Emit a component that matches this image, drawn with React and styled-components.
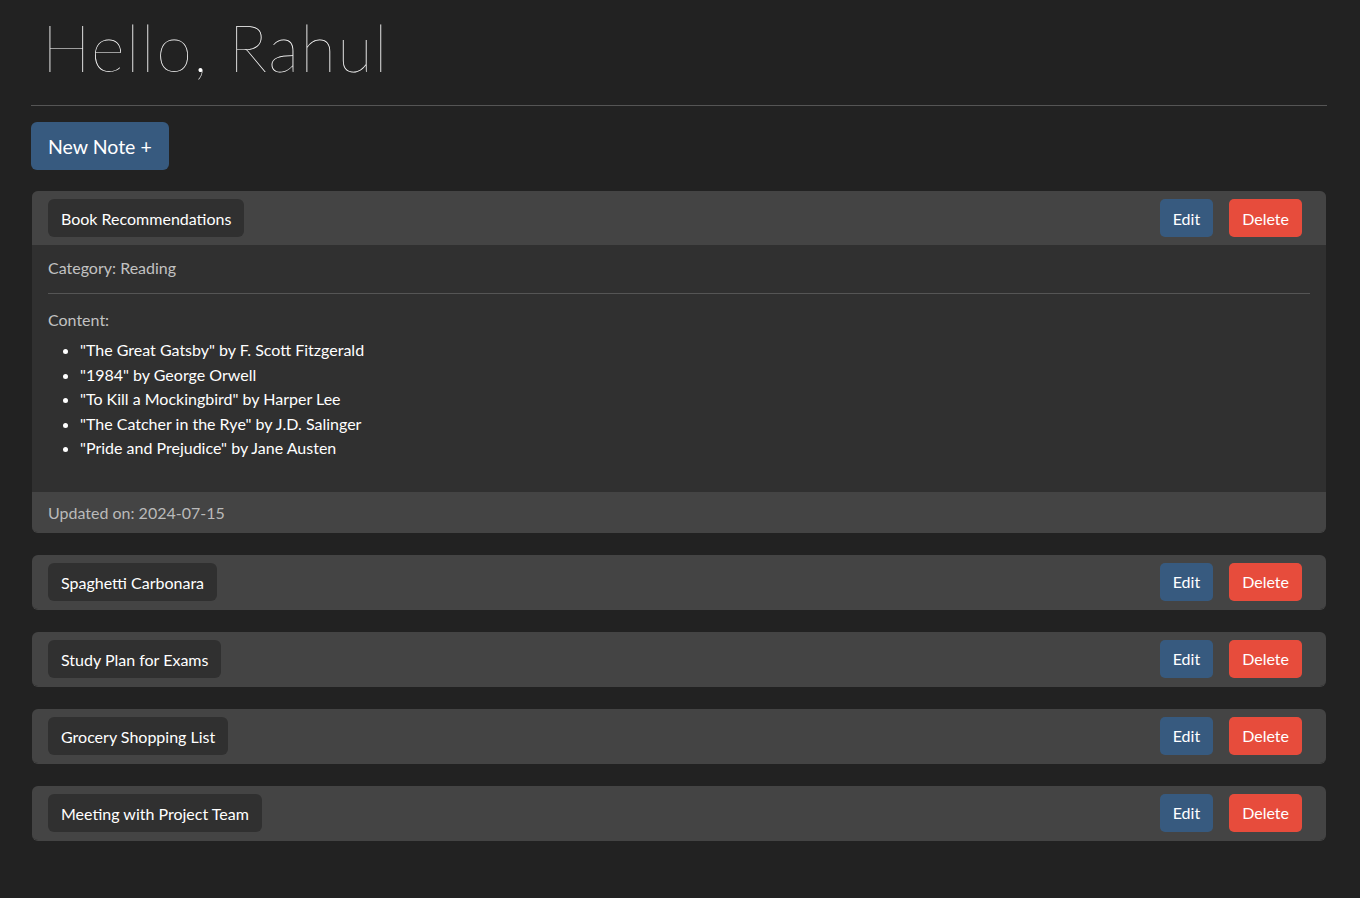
import React from "react";
import styled, { createGlobalStyle } from "styled-components";

const GlobalStyle = createGlobalStyle`
  html, body {
    margin: 0;
    background: #222222;
    color: #ffffff;
    font-family: Lato, "Liberation Sans", sans-serif;
    font-size: 16px;
  }
`;

const Page = styled.div`
  width: 1296px;
  padding: 8px 0 40px 31px;
`;

const Greeting = styled.h1`
  margin: 0 0 0 11px;
  font-family: Lato, "Liberation Sans", sans-serif;
  font-weight: 100;
  font-size: 65px;
  line-height: 78px;
  letter-spacing: 1.5px;
  color: #ffffff;
`;

const Rule = styled.hr`
  margin: ${(p) => p.$margin || "19px 0 16px"};
  border: 0;
  border-top: 1px solid ${(p) => p.$color || "#555555"};
`;

const NewButton = styled.button`
  height: 48px;
  padding: 0 17px;
  border: 0;
  border-radius: 6px;
  background: #375a7f;
  color: #ffffff;
  font-family: Lato, "Liberation Sans", sans-serif;
  font-size: 19.5px;
  cursor: pointer;
`;

const List = styled.div`
  display: flex;
  flex-direction: column;
  gap: 22px;
  margin: 21px 1px 0;
`;

const Card = styled.div`
  background: #303030;
  border-bottom: 1px solid #444444;
  border-radius: 6px;
  overflow: hidden;
`;

const Header = styled.div`
  display: flex;
  align-items: center;
  height: 54px;
  padding: 0 24px 0 16px;
  background: #444444;
`;

const Title = styled.div`
  padding: 0 13px;
  height: 38px;
  line-height: 39px;
  border-radius: 6px;
  background: #303030;
  color: #ffffff;
  font-size: 16px;
`;

const Actions = styled.div`
  display: flex;
  gap: 16px;
  margin-left: auto;
`;

const ActionButton = styled.button`
  height: 38px;
  padding: 0 13px;
  border: 0;
  border-radius: 5px;
  background: ${(p) => (p.$danger ? "#e74c3c" : "#375a7f")};
  color: #ffffff;
  font-family: Lato, "Liberation Sans", sans-serif;
  font-size: 16px;
  cursor: pointer;
`;

const Body = styled.div`
  padding: 11px 16px 16px;
`;

const Label = styled.p`
  margin: 0;
  line-height: 24px;
  color: #c2c2c2;
`;

const Items = styled.ul`
  margin: 6px 0 15px;
  padding-left: 32px;
  li {
    line-height: 24.5px;
    color: #ffffff;
  }
`;

const Footer = styled.div`
  height: 40px;
  padding: 0 16px;
  line-height: 41px;
  background: #444444;
  color: #bababa;
`;

const notes = [
  {
    title: "Book Recommendations",
    category: "Reading",
    items: [
      "\"The Great Gatsby\" by F. Scott Fitzgerald",
      "\"1984\" by George Orwell",
      "\"To Kill a Mockingbird\" by Harper Lee",
      "\"The Catcher in the Rye\" by J.D. Salinger",
      "\"Pride and Prejudice\" by Jane Austen",
    ],
    updated: "2024-07-15",
    open: true,
  },
  { title: "Spaghetti Carbonara" },
  { title: "Study Plan for Exams" },
  { title: "Grocery Shopping List" },
  { title: "Meeting with Project Team" },
];

const NoteCard = ({ note }) => (
  <Card>
    <Header>
      <Title>{note.title}</Title>
      <Actions>
        <ActionButton>Edit</ActionButton>
        <ActionButton $danger>Delete</ActionButton>
      </Actions>
    </Header>
    {note.open && (
      <>
        <Body>
          <Label>Category: {note.category}</Label>
          <Rule $margin="13px 0 14px" $color="#555555" />
          <Label>Content:</Label>
          <Items>
            {note.items.map((item) => (
              <li key={item}>{item}</li>
            ))}
          </Items>
        </Body>
        <Footer>Updated on: {note.updated}</Footer>
      </>
    )}
  </Card>
);

export default function App() {
  return (
    <>
      <GlobalStyle />
      <Page>
        <Greeting>Hello, Rahul</Greeting>
        <Rule />
        <NewButton>New Note +</NewButton>
        <List>
          {notes.map((note) => (
            <NoteCard key={note.title} note={note} />
          ))}
        </List>
      </Page>
    </>
  );
}
